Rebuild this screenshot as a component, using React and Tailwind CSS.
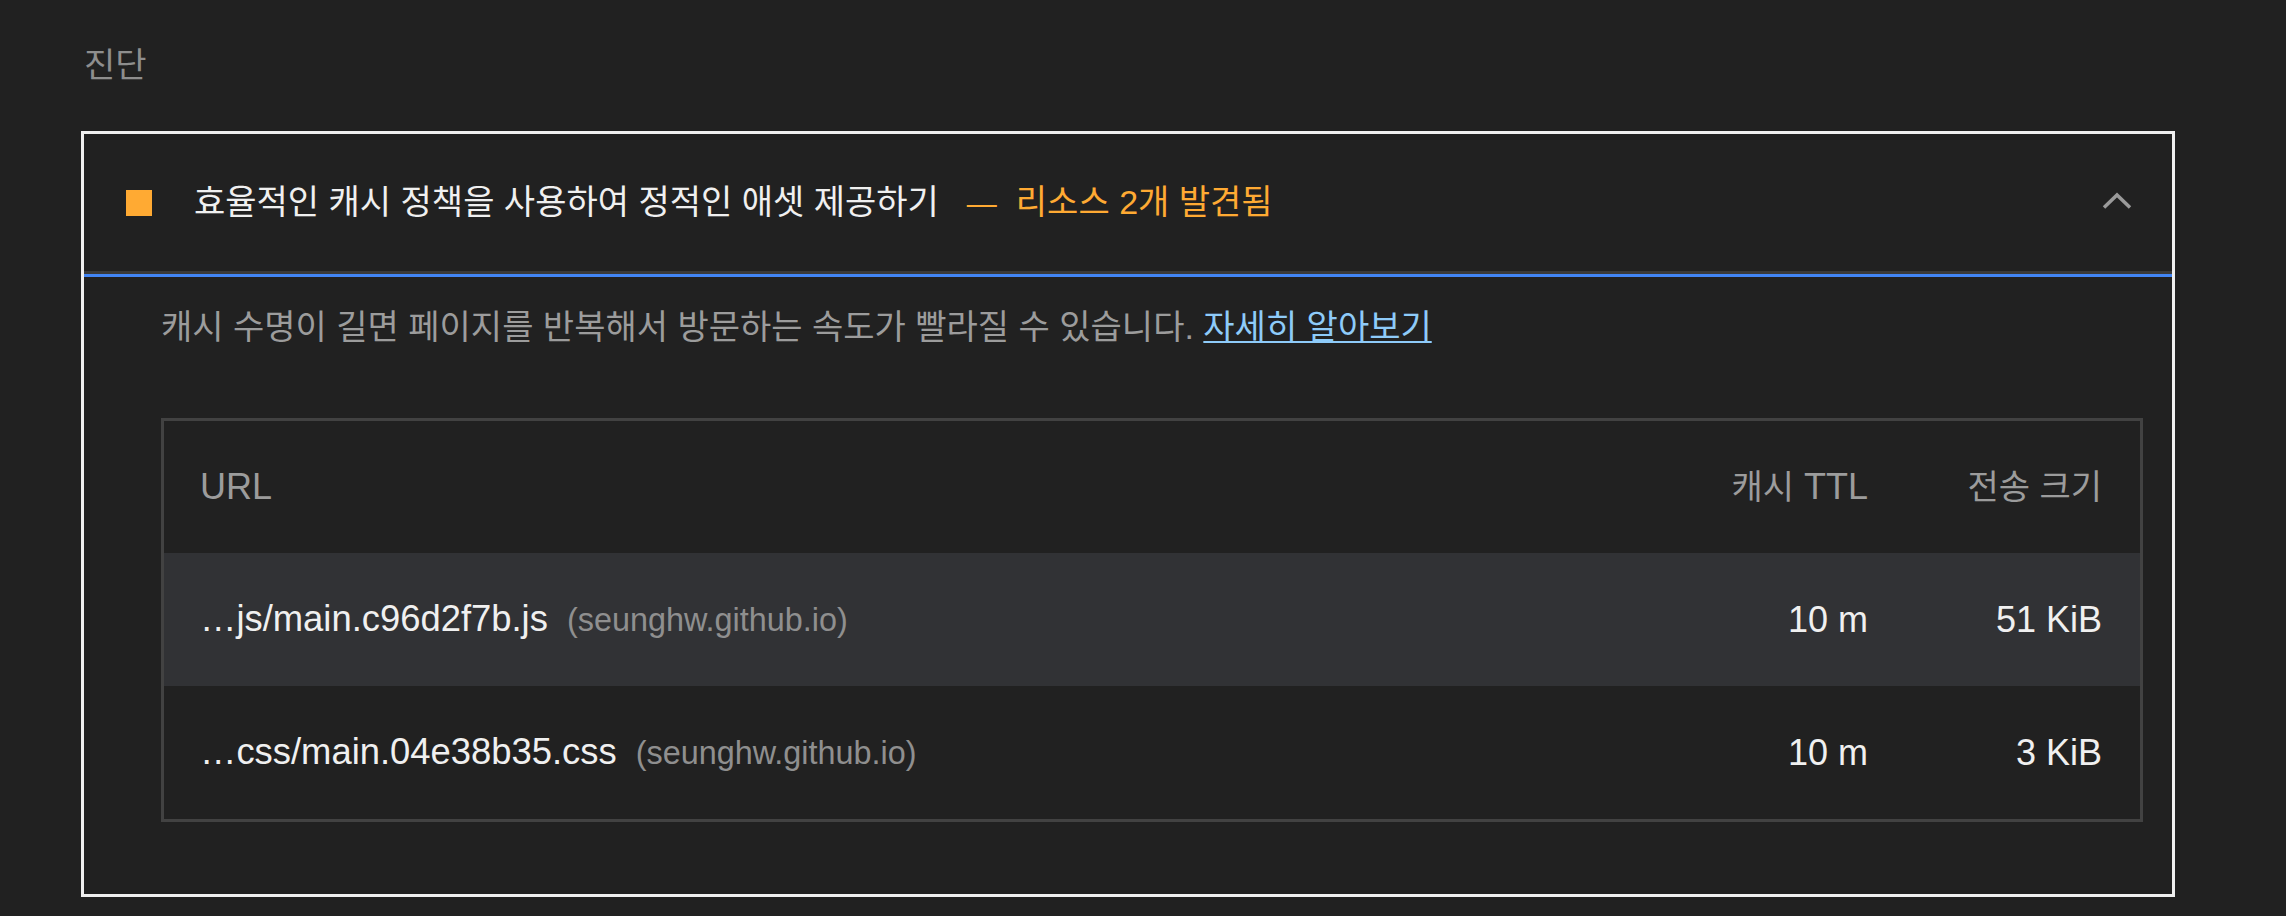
import React from 'react';

const ko = 'text-[34px]';

const rows = [
  { file: '…js/main.c96d2f7b.js', host: '(seunghw.github.io)', ttl: '10 m', size: '51 KiB', shaded: true },
  { file: '…css/main.04e38b35.css', host: '(seunghw.github.io)', ttl: '10 m', size: '3 KiB', shaded: false },
];

const Chevron = () => (
  <svg width="30" height="18" viewBox="0 0 30 18" fill="none" className="mb-[4px]">
    <polyline points="2,15.5 15,3 28,15.5" stroke="#9a9a9a" strokeWidth="3.5" strokeLinecap="butt" />
  </svg>
);

const App = () => {
  return (
    <div
      className="min-h-screen w-full bg-[#212121] text-[#efefef]"
      style={{ fontFamily: '"Liberation Sans", "Noto Sans CJK KR", sans-serif' }}
    >
      <div className="ml-[81px] w-[2094px] pt-[45px]">
        {/* Section heading */}
        <div className={`flex h-[40px] items-center pl-[3px] text-[#8e8e8e] ${ko}`}>진단</div>

        {/* Audit card */}
        <div className="mt-[46px] border-[3px] border-[#efefef] pb-[72px]">
          <div className="flex h-[137px] items-center pl-[42px] pr-[40px]">
            <div className="h-[26px] w-[26px] shrink-0 bg-[#ffaa33]" />
            <div className={`ml-[42px] flex-1 leading-[40px] ${ko}`}>
              <span className="text-[#f0f0f0]">효율적인 캐시 정책을 사용하여 정적인 애셋 제공하기</span>
              <span className="ml-[28px] text-[30px] text-[#ffaa33]">—</span>
              <span className="ml-[19px] text-[#ffaa33]">리소스 2개 발견됨</span>
            </div>
            <Chevron />
          </div>
          <div className="h-[3px] bg-[#3a3a3a]" />
          <div className="h-[3px] bg-[#4285f4]" />

          <div className="pl-[77px] pr-[29px]">
            <p className={`mt-[28px] leading-[44px] text-[#9c9c9c] ${ko}`}>
              캐시 수명이 길면 페이지를 반복해서 방문하는 속도가 빨라질 수 있습니다.{' '}
              <a href="#" className="text-[#8ecbf9] underline decoration-2 underline-offset-[2px]">
                자세히 알아보기
              </a>
            </p>

            {/* Resource table */}
            <div className="mt-[69px] border-[3px] border-[#424242] text-[36px]">
              <div className="flex h-[132px] items-center pl-[36px] pr-[38px] text-[#9c9c9c]">
                <div className="flex-1">URL</div>
                <div className="w-[200px] text-right">
                  <span className={ko}>캐시</span> TTL
                </div>
                <div className={`w-[234px] text-right ${ko}`}>전송 크기</div>
              </div>
              {rows.map((r) => (
                <div
                  key={r.file}
                  className={`flex h-[133px] items-center pl-[36px] pr-[38px] ${r.shaded ? 'bg-[#313235]' : ''}`}
                >
                  <div className="flex flex-1 items-baseline">
                    <span className="text-[36.4px] text-[#f0f0f0]">{r.file}</span>
                    <span className="ml-[19px] text-[32.4px] text-[#8f8f8f]">{r.host}</span>
                  </div>
                  <div className="w-[200px] text-right text-[#f0f0f0]">{r.ttl}</div>
                  <div className="w-[234px] text-right text-[#f0f0f0]">{r.size}</div>
                </div>
              ))}
            </div>
          </div>
        </div>
      </div>
    </div>
  );
};

export default App;
